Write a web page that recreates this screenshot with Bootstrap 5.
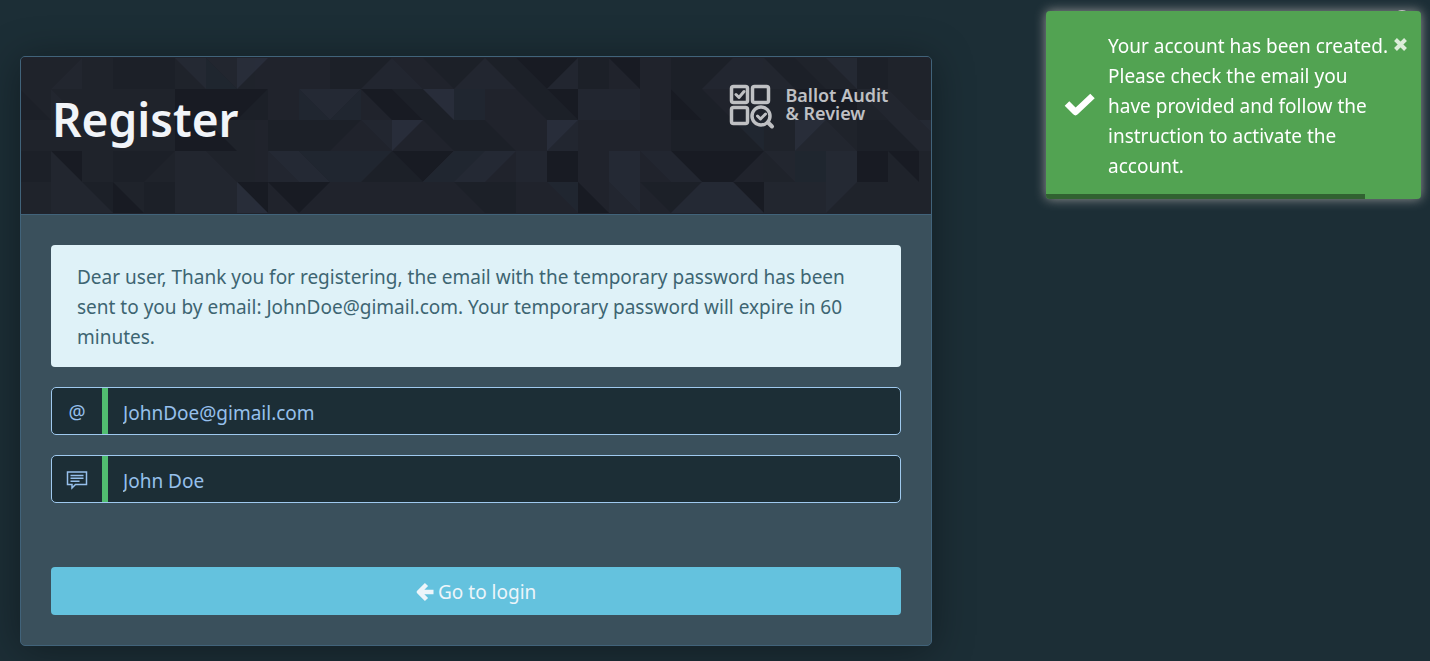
<!DOCTYPE html>
<html lang="en">
<head>
<meta charset="utf-8">
<meta name="viewport" content="width=device-width, initial-scale=1">
<title>Register - Ballot Audit &amp; Review</title>
<link href="https://cdn.jsdelivr.net/npm/bootstrap@5.3.0/dist/css/bootstrap.min.css" rel="stylesheet">
<style>
  body { background: #1c2e36; font-family: "Noto Sans", sans-serif; font-size: 19px; line-height: 30px; color: #edf2f6; }
  .page-col { padding: 56px 21px 15px 20px; }
  .panel { background: #3a505c; border: 1px solid #41637a; border-radius: 5px; overflow: hidden; box-shadow: 0 4px 40px rgba(0,0,0,.36); }
  .panel-head { background: #20232c; border-bottom: 1px solid #41637a; height: 158px; padding: 27px 31px; }
  .mosaic { position: absolute; inset: 0; width: 100%; height: 100%; }
  .mosaic g { opacity: .8; }
  .mosaic .a { fill: #1c2028; } .mosaic .b { fill: #171a22; }
  .mosaic .c { fill: #232731; } .mosaic .d { fill: #262b36; }
  .mosaic .e { fill: #2b303e; } .mosaic .t { fill: #202731; }
  .panel-title { font-size: 46px; line-height: 70px; font-weight: 600; color: #f1f4f8; }
  .brand { color: #bfc0c3; font: 600 18px/18px "Noto Sans", sans-serif; gap: 10px; padding-right: 12px; }
  .brand-name { padding-top: 2px; }
  .panel-main { padding: 30px; }
  .notice { background: #dff2f8; color: #3d6572; border-radius: 4px; padding: 17px 26px 15px; margin-bottom: 20px; }
  .field { border: 1px solid #9fc9ee; border-radius: 5px; background: #1c2e36; color: #96c0ec; margin-bottom: 20px; overflow: hidden; height: 48px; }
  .field-icon { width: 50px; padding-top: 2px; }
  .field input { background: transparent; border: 0; border-left: 6px solid #51bd70; color: inherit; padding: 4px 15px 0; outline: 0; min-width: 0; }
  .login { background: #64c2de; color: #edf5fa; border: 0; border-radius: 4px; height: 48px; margin-top: 64px; padding: 2px 0 0; gap: 4px; }
  .note-toast { position: fixed; top: 11px; right: 9px; width: 375px; background: #52a352; color: #fff; border-radius: 4px; box-shadow: 0 0 12px #999; padding: 20px 31px 18px 62px; overflow: hidden; }
  .note-check { position: absolute; left: 18px; top: 81px; }
  .note-close { position: absolute; right: 13px; top: 26px; border: 0; background: none; padding: 0; line-height: 1; color: #dcedda; }
  .note-close svg { display: block; }
  .note-bar { position: absolute; left: 0; bottom: 0; height: 5px; background: #316231; }
  .corner-dot { position: fixed; top: 10px; right: 20px; width: 16px; height: 16px; border-radius: 50%; background: #e8e8e8; }
</style>
</head>
<body>
<div class="container-fluid p-0">
  <div class="row g-0">
    <main class="col-8 page-col">
      <section class="panel">
        <header class="panel-head position-relative overflow-hidden">
          <svg class="mosaic" aria-hidden="true"><g transform="translate(-1 1) scale(31)">
            <path class="a" d="M3 0h2v1h-2zM0 1l1 1H0zM0 3h1v1H0zM3 3h2l-1 1h-1zM4 4h1l1 1h-2zM2 4h1v1zM13 0h2l-1 1zM15 0h1l1 1h-1zM18 0h1v1h-1zM12 1h1l1 1h-1zM17 1l1 1h-1zM16 1l1 1V1zM8 2h3l-1 1H8zM13 2h2l1 1h-2zM12 3l-1 1h2zM14 4h2v1h-1zM21 0h2l-1 1h-1zM24 0h1l1 1h-1zM27 0h1v1h-1zM21 1h1l1 1h-1zM21 2h2l1 1h-3zM28 2l1 1h-2V2zM20 4h2l-1 1zM8 1l-1 1h1zM10 0h2l-1 1h-1z"/>
            <path class="b" d="M5 1h3l-1 1h-2zM5 2h1l1 1h-2zM1 3h1v1zM3 4l1 1h-1zM7 4h1v1zM8 4h2l-1 1zM16 0h2l-1 1zM19 0h1v1zM11 1h1l1 1h-1zM17 1h1v1zM12 3h2l-1 1zM17 3h1v1h-1zM18 4l1 1h-1zM21 1l1 1h-1zM25 1h2v1h-1zM21 3h3l-1 1h-1zM27 3h1v1h-1zM28 3h1v1zM23 4h1v1z"/>
            <path class="c" d="M6 0h1v1zM1 1l1 1h-1zM9 1h1v1zM1 3l2 2H1zM5 3h1l2 2H5V4zM12 0l1 1h-2zM15 0l1 1h-2zM18 0v1h-1zM18 1h2v1h-2zM11 2h1v1zM18 2v1h-1zM23 0h1l1 1h-3zM26 2l1 1h-2zM27 1h1l2 2h-1zM20 3h1l1 1h-1zM24 3h1v1zM8 3l1 1H8zM16 3h1v1h-1zM19 4l1 1h-1zM2 0v1H1zM24 4h2v1h-2z"/>
            <path class="d" d="M5 0h1v1zM9 1h2l-1 1zM8 3h1l1 1h-1zM14 3h2l-1 1h-2zM26 0h1v1zM29 2h1v1zM26 3h1v1l-1 1zM21 5l1-1h1l1 1zM19 3h1v2l-1-1z"/>
            <path class="e" d="M7 0h1l-1 1zM7 4l1 1h-1zM13 1h1v1zM12 2h1l-1 1zM17 2h1l-1 1zM25 2h1l-1 1z"/>
            <path class="t" d="M9 1l1 1H9zM11 1v1h-1zM14 1h1v1h-1zM9 3h3l-1 1h-1zM14 3h1l-1 1h-1zM17 4h1v1zM23 2h1v1zM25 3h1v1h-1zM6 0l1 1H6z"/>
          </g></svg>
          <div class="position-relative d-flex justify-content-between align-items-start">
            <h1 class="panel-title m-0">Register</h1>
            <div class="brand d-flex align-items-start">
              <svg width="46" height="46" viewBox="0 0 46 46" fill="none" stroke="currentColor" stroke-width="3.500" stroke-linecap="round" stroke-linejoin="round" aria-hidden="true">
                <rect x="2.500" y="2.500" width="16" height="16" rx="2"/><rect x="23.500" y="2.500" width="16" height="16" rx="2"/><rect x="2.500" y="23.500" width="16" height="16" rx="2"/>
                <path d="M7 10.500l3 3 5-6M28.500 32l3 3 5-5" stroke-width="3"/><circle cx="32" cy="32" r="9"/><path d="M39 38.500l4 4" stroke-width="4"/>
              </svg>
              <div class="brand-name">Ballot Audit<br>&amp; Review</div>
            </div>
          </div>
        </header>
        <form class="panel-main">
          <div class="notice" role="alert">Dear user, Thank you for registering, the email with the temporary password has been sent to you by email: JohnDoe@gimail.com. Your temporary password will expire in 60 minutes.</div>
          <div class="field d-flex">
            <label class="field-icon d-flex align-items-center justify-content-center flex-shrink-0" for="email">@</label>
            <input class="flex-grow-1" id="email" type="text" value="JohnDoe@gimail.com" readonly>
          </div>
          <div class="field d-flex">
            <label class="field-icon d-flex align-items-center justify-content-center flex-shrink-0" for="name" aria-label="Name">
              <svg width="22" height="20" viewBox="0 0 22 20" fill="none" stroke="currentColor" stroke-width="1.500" aria-hidden="true"><path d="M1.500 2h19v12.500h-11L6 18v-3.500H1.500zM4.500 5.500h13M4.500 8.300h13M4.500 11.200h9"/></svg>
            </label>
            <input class="flex-grow-1" id="name" type="text" value="John Doe" readonly>
          </div>
          <button class="login w-100 d-flex align-items-center justify-content-center" type="button">
            <svg width="18" height="20" viewBox="0 0 18 20" fill="none" stroke="currentColor" stroke-width="4.500" stroke-linejoin="round" aria-hidden="true"><path d="M10.500 2.500L3 10l7.500 7.500M3.500 10H17.500"/></svg>
            <span>Go to login</span>
          </button>
        </form>
      </section>
    </main>
  </div>
</div>
<span class="corner-dot"></span>
<div class="note-toast" role="status">
  <svg class="note-check" width="32" height="25" viewBox="0 0 32 25" fill="none" stroke="#fff" stroke-width="6.500" stroke-linejoin="round" aria-hidden="true"><path d="M3 11.500l8.500 8.500L28.500 4"/></svg>
  Your account has been created. Please check the email you have provided and follow the instruction to activate the account.
  <button class="note-close" type="button" aria-label="Close"><svg width="15" height="15" viewBox="0 0 15 15" fill="none" stroke="currentColor" stroke-width="4" aria-hidden="true"><path d="M2.500 2.500l10 10M12.500 2.500l-10 10"/></svg></button>
  <div class="note-bar" style="width:85%"></div>
</div>
<script src="https://cdn.jsdelivr.net/npm/bootstrap@5.3.0/dist/js/bootstrap.bundle.min.js"></script>
</body>
</html>
